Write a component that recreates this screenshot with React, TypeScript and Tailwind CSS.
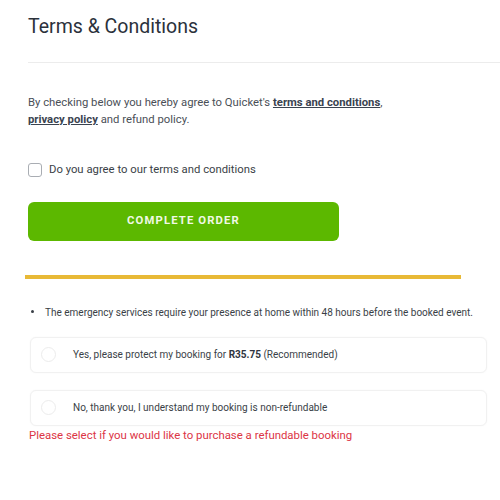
import React from "react";

const Option = ({ children }: { children: React.ReactNode }) => (
  <div className="flex items-center h-[36px] rounded-md border border-[#f1f1f1] bg-white shadow-[0_0_2px_rgba(0,0,0,0.04)]">
    <span className="ml-[10px] w-[15px] h-[15px] rounded-full border border-[#ececec]" />
    <span className="ml-[17px] text-[10px] text-[#3a3f47]">{children}</span>
  </div>
);

export default function App() {
  return (
    <div className="w-[500px] h-[500px] bg-white overflow-hidden font-['Roboto',sans-serif]">
      <div className="pl-[28px] pt-[14px]">
        <h1 className="text-[19.5px] leading-[26px] text-[#2b313b]">Terms &amp; Conditions</h1>
        <div className="mt-[22px] border-t border-[#ececec]" />

        <p className="mt-[31px] text-[11.3px] leading-[17px] text-[#4a4f57] w-[380px]">
          By checking below you hereby agree to Quicket's{" "}
          <span className="font-bold underline text-[#3a4350]">terms and conditions</span>,{" "}
          <span className="font-bold underline text-[#3a4350]">privacy policy</span> and refund policy.
        </p>

        <label className="mt-[34px] flex items-center">
          <span className="w-[14px] h-[14px] rounded-[3px] border border-[#a9adb3] bg-white" />
          <span className="ml-[7px] text-[11.3px] text-[#3a3f47]">Do you agree to our terms and conditions</span>
        </label>

        <button className="mt-[23px] w-[311px] h-[39px] rounded-[6px] bg-[#5cb800] text-[#f0f8e6] text-[11.3px] font-bold tracking-[0.1em]">
          COMPLETE ORDER
        </button>

        <div className="mt-[34px] -ml-[3px] w-[436px] h-[4px] bg-[#e8b936]" />

        <div className="mt-[27px] flex items-center h-[12px] overflow-hidden text-[10px] text-[#3a3f47]">
          <span className="ml-[3px] w-[3px] h-[3px] rounded-full bg-[#3a3f47]" />
          <span className="ml-[11px] mt-[1px]">The emergency services require your presence at home within 48 hours before the booked event.</span>
        </div>

        <div className="mt-[19px] ml-[2px] w-[457px] flex flex-col gap-[17px]">
          <Option>
            Yes, please protect my booking for <b className="font-bold text-[#2f3540]">R35.75</b> (Recommended)
          </Option>
          <Option>No, thank you, I understand my booking is non-refundable</Option>
        </div>

        <p className="mt-[1px] ml-[1px] text-[11.4px] text-[#dc3545]">
          Please select if you would like to purchase a refundable booking
        </p>
      </div>
    </div>
  );
}
